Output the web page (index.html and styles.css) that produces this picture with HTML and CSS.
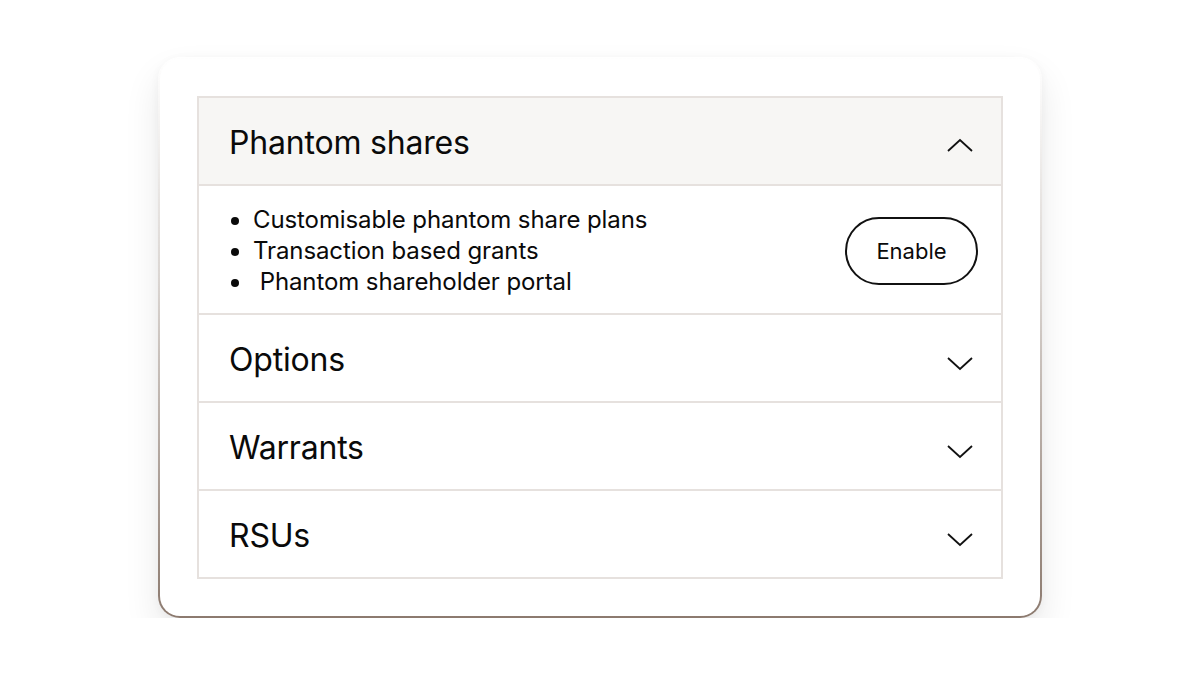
FILE: index.html
```html
<!DOCTYPE html>
<html lang="en">
<head>
  <meta charset="UTF-8">
  <title>Equity plans</title>
  <link rel="stylesheet" href="styles.css">
</head>
<body>
  <div class="card">
    <div class="accordion">
      <div class="item open">
        <div class="head">
          <span class="title">Phantom shares</span>
          <svg class="chev" width="26" height="14" viewBox="0 0 26 14"><path d="M1 13 L13 2 L25 13" fill="none" stroke="#111" stroke-width="1.8"/></svg>
        </div>
        <div class="body">
          <ul class="features">
            <li>Customisable phantom share plans</li>
            <li>Transaction based grants</li>
            <li>&nbsp;Phantom shareholder portal</li>
          </ul>
          <button class="enable">Enable</button>
        </div>
      </div>
      <div class="item">
        <div class="head">
          <span class="title">Options</span>
          <svg class="chev" width="26" height="14" viewBox="0 0 26 14"><path d="M1 1 L13 12 L25 1" fill="none" stroke="#111" stroke-width="1.8"/></svg>
        </div>
      </div>
      <div class="item">
        <div class="head">
          <span class="title">Warrants</span>
          <svg class="chev" width="26" height="14" viewBox="0 0 26 14"><path d="M1 1 L13 12 L25 1" fill="none" stroke="#111" stroke-width="1.8"/></svg>
        </div>
      </div>
      <div class="item">
        <div class="head">
          <span class="title">RSUs</span>
          <svg class="chev" width="26" height="14" viewBox="0 0 26 14"><path d="M1 1 L13 12 L25 1" fill="none" stroke="#111" stroke-width="1.8"/></svg>
        </div>
      </div>
    </div>
  </div>
</body>
</html>
```
FILE: styles.css
```css
body { margin: 0; background: #fff; font-family: Inter, "Noto Sans", sans-serif; color: #0a0a0a; }
.card {
  width: 806px; margin: 57px 0 0 158px; padding: 37px;
  border: 2px solid transparent; border-radius: 22px;
  background: linear-gradient(#fff, #fff) padding-box,
              linear-gradient(to bottom, rgba(150,135,125,0) 0%, rgba(150,135,125,0.35) 40%, #8c7a6f 100%) border-box;
  box-shadow: 0 18px 36px rgba(0,0,0,0.09), 0 2px 10px rgba(0,0,0,0.04);
}
.accordion { border: 2px solid #e6e1de; }
.item + .item, .body { border-top: 2px solid #e6e1de; }
.head { height: 86px; display: flex; align-items: center; justify-content: space-between; padding: 0 28px 0 30px; }
.open .head { background: #f7f6f4; }
.title { font-size: 32px; letter-spacing: -0.2px; margin-top: 3px; }
.chev { margin-top: 11px; }
.open .chev { margin-top: 8px; }
.body { display: flex; align-items: center; justify-content: space-between; padding: 18px 23px 16px 32px; }
.features { margin: 0; padding: 0 0 0 22px; font-size: 24px; line-height: 31px; letter-spacing: -0.1px; }
.enable { width: 133px; height: 68px; border: 2px solid #111; border-radius: 34px; background: #fff; font-family: inherit; font-size: 22px; color: #0a0a0a; }
```
